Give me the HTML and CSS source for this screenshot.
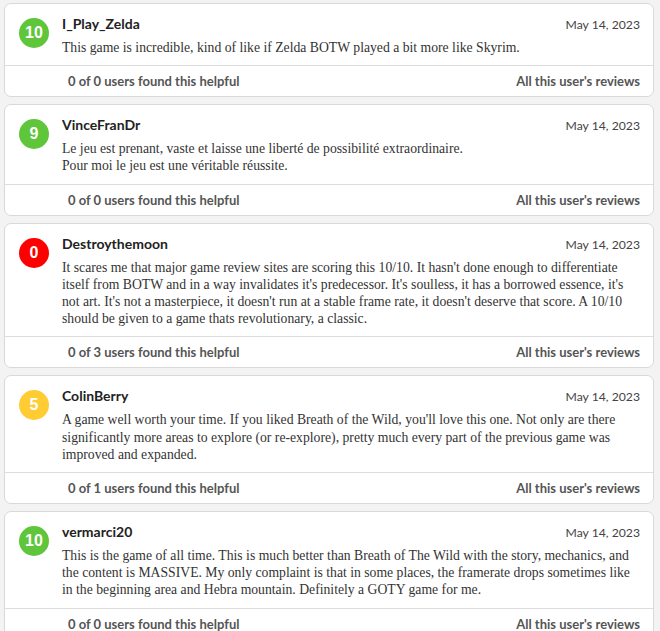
FILE: index.html
```html
<!DOCTYPE html>
<html>
<head>
<meta charset="utf-8">
<link rel="stylesheet" href="styles.css">
</head>
<body>
<div class="list">
  <div class="review">
    <div class="main">
      <div class="score green">10</div>
      <div class="content">
        <div class="head"><span class="name">I_Play_Zelda</span><span class="date">May 14, 2023</span></div>
        <div class="body">This game is incredible, kind of like if Zelda BOTW played a bit more like Skyrim.</div>
      </div>
    </div>
    <div class="foot"><span class="helpful">0 of 0 users found this helpful</span><span class="all">All this user's reviews</span></div>
  </div>
  <div class="review">
    <div class="main">
      <div class="score green">9</div>
      <div class="content">
        <div class="head"><span class="name">VinceFranDr</span><span class="date">May 14, 2023</span></div>
        <div class="body">Le jeu est prenant, vaste et laisse une liberté de possibilité extraordinaire.<br>Pour moi le jeu est une véritable réussite.</div>
      </div>
    </div>
    <div class="foot"><span class="helpful">0 of 0 users found this helpful</span><span class="all">All this user's reviews</span></div>
  </div>
  <div class="review">
    <div class="main">
      <div class="score red">0</div>
      <div class="content">
        <div class="head"><span class="name">Destroythemoon</span><span class="date">May 14, 2023</span></div>
        <div class="body">It scares me that major game review sites are scoring this 10/10. It hasn't done enough to differentiate itself from BOTW and in a way invalidates it's predecessor. It's soulless, it has a borrowed essence, it's not art. It's not a masterpiece, it doesn't run at a stable frame rate, it doesn't deserve that score. A 10/10 should be given to a game thats revolutionary, a classic.</div>
      </div>
    </div>
    <div class="foot"><span class="helpful">0 of 3 users found this helpful</span><span class="all">All this user's reviews</span></div>
  </div>
  <div class="review">
    <div class="main">
      <div class="score yellow">5</div>
      <div class="content">
        <div class="head"><span class="name">ColinBerry</span><span class="date">May 14, 2023</span></div>
        <div class="body">A game well worth your time. If you liked Breath of the Wild, you'll love this one. Not only are there significantly more areas to explore (or re-explore), pretty much every part of the previous game was improved and expanded.</div>
      </div>
    </div>
    <div class="foot"><span class="helpful">0 of 1 users found this helpful</span><span class="all">All this user's reviews</span></div>
  </div>
  <div class="review">
    <div class="main">
      <div class="score green">10</div>
      <div class="content">
        <div class="head"><span class="name">vermarci20</span><span class="date">May 14, 2023</span></div>
        <div class="body">This is the game of all time. This is much better than Breath of The Wild with the story, mechanics, and the content is MASSIVE. My only complaint is that in some places, the framerate drops sometimes like in the beginning area and Hebra mountain. Definitely a GOTY game for me.</div>
      </div>
    </div>
    <div class="foot"><span class="helpful">0 of 0 users found this helpful</span><span class="all">All this user's reviews</span></div>
  </div>
</div>
</body>
</html>
```
FILE: styles.css
```css
html, body {
  margin: 0;
  padding: 0;
  background: #f3f3f3;
}
.list {
  display: flex;
  flex-direction: column;
  gap: 7px;
  padding: 3px 6px 0 4px;
}
.review {
  background: #fff;
  border: 1px solid #d9d9d9;
  border-radius: 7px;
  font-family: "Lato", "Liberation Sans", sans-serif;
}
.main {
  display: flex;
  gap: 13px;
  padding: 11px 13px 9px 14px;
}
.score {
  flex: none;
  width: 30px;
  height: 30px;
  margin-top: 3px;
  border-radius: 50%;
  color: #fff;
  font-family: "Liberation Sans", sans-serif;
  font-weight: 700;
  font-size: 16px;
  display: flex;
  align-items: center;
  justify-content: center;
}
.green { background: #5fc53a; }
.red { background: #f00; }
.yellow { background: #fc3; }
.content {
  flex: 1;
  min-width: 0;
}
.head {
  display: flex;
  justify-content: space-between;
  align-items: baseline;
  height: 19px;
  margin-bottom: 5px;
}
.name {
  font-size: 14px;
  font-weight: 700;
  color: #222;
}
.date {
  font-size: 12.2px;
  color: #444;
}
.body {
  font-family: "Liberation Serif", serif;
  font-size: 13.7px;
  line-height: 17.2px;
  color: #333;
}
.foot {
  display: flex;
  justify-content: space-between;
  border-top: 1px solid #ddd;
  padding: 7px 13px 7px 63px;
  height: 16px;
  font-size: 13px;
  font-weight: 700;
  color: #555;
}
```
